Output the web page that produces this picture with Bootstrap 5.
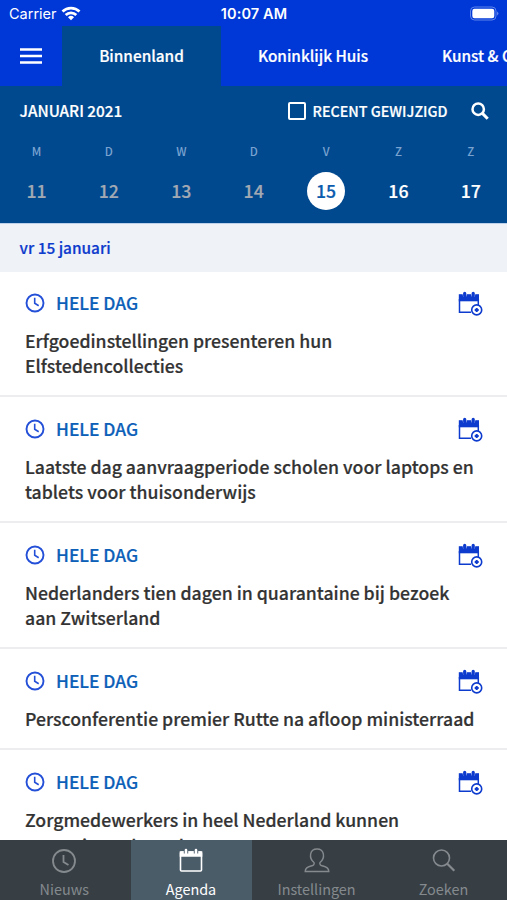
<!DOCTYPE html>
<html lang="nl">
<head>
<meta charset="utf-8">
<meta name="viewport" content="width=device-width, initial-scale=1">
<title>Agenda</title>
<link href="https://cdn.jsdelivr.net/npm/bootstrap@5.3.0/dist/css/bootstrap.min.css" rel="stylesheet">
<style>
  body { height: 900px; font-family: "Noto Sans CJK SC", "Noto Sans", sans-serif; font-weight: 500; color: #333; -webkit-text-stroke: .2px currentColor; }
  .screen { height: 900px; }
  .top-bar { background: #0038d8; }
  .status { height: 26px; font: 400 14.5px/27px Inter, "Liberation Sans", sans-serif; -webkit-text-stroke: 0; }
  .status > * { flex: 1 1 0; }
  .carrier { padding-left: 9px; }
  .clock-time { font-weight: 600; letter-spacing: .1px; }
  .tabs { height: 60px; font-size: 15.35px; line-height: 59px; }
  .menu-btn { width: 62px; }
  .tab-item { width: 159px; }
  .tab-royal { width: 184px; }
  .tab-art { padding-left: 37px; }
  .blue-panel { background: #00498f; }
  .filter-row { height: 50px; font-size: 15.3px; line-height: 48px; }
  .filter-row > span { margin-top: -1px; }
  .filter-row > .month { margin-top: -2px; padding-left: 19.5px; }
  .recent { font-size: 14.3px; }
  .box { width: 18px; height: 18px; border: 2px solid #fff; border-radius: 2px; margin-right: 6.5px; }
  .lens { margin: 0 18.5px 0 23px; }
  .week { height: 87px; }
  .week > div { flex: 0 0 72.4px; }
  .day-letter { height: 30px; font-size: 11.5px; line-height: 30px; color: #7ba3d0; -webkit-text-stroke: 0; }
  .day-number { width: 38px; height: 38px; font-size: 17.7px; line-height: 36px; margin-top: 6px; }
  .week > div { padding-left: .6px; }
  .past { color: #a3a9b3; }
  .chosen { background: #fff; color: #0b5cae; }
  .date-head { height: 49px; line-height: 47px; padding-left: 19.5px; background: #eff2f7; color: #0d3bcd; font-size: 15.4px; border-top: 1px solid #bdd2ea; }
  .event { height: 126px; padding: 19px 24px 0 25px; border-bottom: 2px solid #ededef; }
  .event:first-of-type { height: 125px; padding-top: 18px; }
  .event.single { height: 101px; }
  .event-label { font-size: 17.4px; line-height: 26px; color: #0c60b8; margin-left: 11px; margin-top: -1px; }
  .event-title { font-size: 17.67px; line-height: 24.5px; margin-top: 13px; }
  .event:last-of-type .event-title { line-height: 25.5px; margin-top: 12px; }
  .bottom-bar { height: 60px; background: #373f45; color: #858a8e; font-size: 14.4px; font-weight: 400; -webkit-text-stroke: 0; }
  .bottom-bar > a { color: inherit; flex: 0 0 126.5px; line-height: 20px; padding-top: 6px; }
  .bottom-bar > a.current { background: #4b5c69; color: #fff; flex-basis: 121px; }
  .bottom-bar > a:first-child { flex-basis: 130.5px; padding-right: 2px; }
  .bottom-bar > a:nth-child(3) { flex-basis: 130px; }
  .bottom-bar > a:nth-child(4) { flex-basis: 125px; padding-right: 1px; }
  .bottom-bar span { margin-top: 3px; }
</style>
<script src="https://cdn.jsdelivr.net/npm/bootstrap@5.3.0/dist/js/bootstrap.bundle.min.js"></script>
</head>
<body class="overflow-hidden bg-white">
<svg class="d-none">
  <symbol id="clock" viewBox="0 0 20 20"><g fill="none" stroke="currentColor" stroke-width="1.9"><circle cx="10" cy="10" r="8.500"/><path d="M9.700 4.800v5.400l4 2.500" stroke-width="1.600"/></g></symbol>
  <symbol id="cal-add" viewBox="0 -1 26 26"><path d="M1.800 3.200h20.200V10.300H1.800z" fill="#0d3bcd"/><path d="M7.700 2.500v1.500M16.200 2.500v1.500" stroke="#fff" stroke-width="4" stroke-linecap="round"/><path d="M7.700 2.300v2.500M16.200 2.300v2.500" stroke="#0d3bcd" stroke-width="3.200" stroke-linecap="round"/><path d="M21.300 8v6M14 21.300H2.500V8" fill="none" stroke="#0d3bcd" stroke-width="1.500"/><circle cx="19.700" cy="18.900" r="5" fill="#fff" stroke="#0d3bcd" stroke-width="1.600"/><path d="M19.700 16.900v4M17.700 18.900h4" stroke="#0d3bcd" stroke-width="2"/></symbol>
</svg>
<div class="screen d-flex flex-column overflow-hidden">
  <header class="top-bar text-white flex-shrink-0">
    <div class="status d-flex">
      <div class="carrier d-flex align-items-center gap-1"><span>Carrier</span>
        <svg width="20" height="15" viewBox="0 0 20 15" fill="none" stroke="#fff" stroke-width="2.700"><path d="M1.500 5.500a12.200 12.200 0 0 1 17 0M4.700 9a7.600 7.600 0 0 1 10.600 0"/><path d="M7 11.200a4.300 4.300 0 0 1 6 0L10 14.200z" fill="#fff" stroke="none"/></svg>
      </div>
      <div class="clock-time text-center">10:07 AM</div>
      <div class="d-flex justify-content-end align-items-center pe-2">
        <svg width="30" height="15" viewBox="0 0 30 15"><rect x="1.500" y="1" width="25.500" height="13" rx="4" fill="none" stroke="#5f84ea"/><rect x="3.300" y="2.800" width="22" height="9.400" rx="2.200" fill="#fff"/><path d="M28.300 5.500q2 2 0 4z" fill="#8aa5ef"/></svg>
      </div>
    </div>
    <nav class="tabs d-flex text-nowrap">
      <div class="menu-btn flex-shrink-0 d-flex align-items-center justify-content-center"><svg width="22" height="16" viewBox="0 0 22 16"><path d="M0 1.500h22M0 8h22M0 14.500h22" stroke="#fff" stroke-width="2.500"/></svg></div>
      <div class="tab-item blue-panel flex-shrink-0 text-center">Binnenland</div>
      <div class="tab-royal flex-shrink-0 text-center">Koninklijk Huis</div>
      <div class="tab-art flex-shrink-0">Kunst &amp; Cultuur</div>
    </nav>
  </header>
  <section class="blue-panel text-white flex-shrink-0">
    <div class="filter-row d-flex align-items-center">
      <span class="month">JANUARI 2021</span>
      <span class="ms-auto box"></span><span class="recent">RECENT GEWIJZIGD</span>
      <svg class="lens" width="18" height="18" viewBox="0 0 18 18" fill="none" stroke="#fff"><circle cx="7.200" cy="7.200" r="5.700" stroke-width="2.500"/><path d="M11.400 11.400l5.300 5.300" stroke-width="3"/></svg>
    </div>
    <div class="week d-flex text-center">
      <div><div class="day-letter">M</div><div class="day-number past mx-auto">11</div></div>
      <div><div class="day-letter">D</div><div class="day-number past mx-auto">12</div></div>
      <div><div class="day-letter">W</div><div class="day-number past mx-auto">13</div></div>
      <div><div class="day-letter">D</div><div class="day-number past mx-auto">14</div></div>
      <div><div class="day-letter">V</div><div class="day-number chosen rounded-circle mx-auto">15</div></div>
      <div><div class="day-letter">Z</div><div class="day-number mx-auto">16</div></div>
      <div><div class="day-letter">Z</div><div class="day-number mx-auto">17</div></div>
    </div>
  </section>
  <main class="flex-fill overflow-hidden">
    <div class="date-head">vr 15 januari</div>
    <article class="event"><div class="d-flex align-items-center"><svg width="20" height="20" color="#2450d8"><use href="#clock"/></svg><span class="event-label">HELE DAG</span><svg class="ms-auto" width="26" height="26"><use href="#cal-add"/></svg></div><div class="event-title">Erfgoedinstellingen presenteren hun<br>Elfstedencollecties</div></article>
    <article class="event"><div class="d-flex align-items-center"><svg width="20" height="20" color="#2450d8"><use href="#clock"/></svg><span class="event-label">HELE DAG</span><svg class="ms-auto" width="26" height="26"><use href="#cal-add"/></svg></div><div class="event-title">Laatste dag aanvraagperiode scholen voor laptops en<br>tablets voor thuisonderwijs</div></article>
    <article class="event"><div class="d-flex align-items-center"><svg width="20" height="20" color="#2450d8"><use href="#clock"/></svg><span class="event-label">HELE DAG</span><svg class="ms-auto" width="26" height="26"><use href="#cal-add"/></svg></div><div class="event-title">Nederlanders tien dagen in quarantaine bij bezoek<br>aan Zwitserland</div></article>
    <article class="event single"><div class="d-flex align-items-center"><svg width="20" height="20" color="#2450d8"><use href="#clock"/></svg><span class="event-label">HELE DAG</span><svg class="ms-auto" width="26" height="26"><use href="#cal-add"/></svg></div><div class="event-title text-nowrap">Persconferentie premier Rutte na afloop ministerraad</div></article>
    <article class="event"><div class="d-flex align-items-center"><svg width="20" height="20" color="#2450d8"><use href="#clock"/></svg><span class="event-label">HELE DAG</span><svg class="ms-auto" width="26" height="26"><use href="#cal-add"/></svg></div><div class="event-title">Zorgmedewerkers in heel Nederland kunnen<br>gevaccineerd worden</div></article>
  </main>
  <nav class="bottom-bar d-flex flex-shrink-0 text-center">
    <a class="d-flex flex-column align-items-center text-decoration-none"><svg width="30" height="30" viewBox="0 0 30 30" fill="none" stroke="currentColor" stroke-width="1.800"><circle cx="15" cy="15" r="11"/><path d="M14.500 9v7l5 3"/></svg><span>Nieuws</span></a>
    <a class="current d-flex flex-column align-items-center text-decoration-none"><svg width="30" height="30" viewBox="0 0 30 30" fill="none" stroke="currentColor" stroke-width="1.600"><rect x="4.500" y="6" width="21" height="19" rx="1"/><path d="M4.500 6h21v4h-21z" fill="currentColor"/><path d="M10 3.500v4M20 3.500v4" stroke="#4b5c69" stroke-width="4.400"/><path d="M10 4v4M20 4v4" stroke-width="2.600" stroke-linecap="round"/></svg><span>Agenda</span></a>
    <a class="d-flex flex-column align-items-center text-decoration-none"><svg width="30" height="30" viewBox="0 0 30 30" fill="none" stroke="currentColor" stroke-width="1.400"><path d="M12 16.500C6.500 12 7.500 3 15 3s8.500 9 3 13.500c-.7 1.700.5 3 3 3.500 4 .9 5.800 2 5.800 5.500H3.200c0-3.500 1.800-4.600 5.800-5.500 2.500-.5 3.700-1.800 3-3.500z"/></svg><span>Instellingen</span></a>
    <a class="d-flex flex-column align-items-center text-decoration-none"><svg width="30" height="30" viewBox="0 0 30 30" fill="none" stroke="currentColor" stroke-width="1.600"><circle cx="12.500" cy="12" r="8"/><path d="M18.300 17.800l7 7" stroke-width="2.200"/></svg><span>Zoeken</span></a>
  </nav>
</div>
</body>
</html>
